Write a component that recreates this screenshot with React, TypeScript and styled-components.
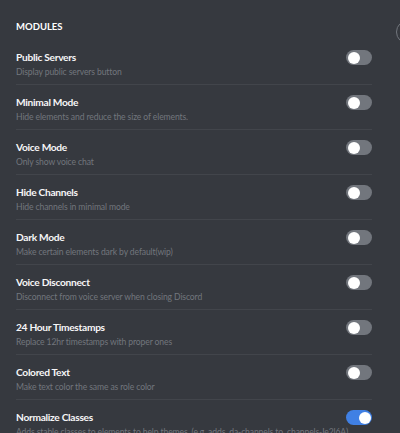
import styled, { createGlobalStyle } from "styled-components";

const GlobalStyle = createGlobalStyle`
  html, body {
    margin: 0;
    padding: 0;
    background: #36393f;
    overflow: hidden;
  }
  * {
    box-sizing: border-box;
  }
`;

const Page = styled.div`
  position: relative;
  width: 400px;
  height: 433px;
  overflow: hidden;
  background: #36393f;
  font-family: Lato, "Noto Sans", sans-serif;
  padding: 0 28px 0 16px;
`;

const Heading = styled.h2`
  margin: 0;
  padding-top: 20px;
  margin-bottom: 7px;
  font-size: 9.5px;
  line-height: 13px;
  font-weight: 700;
  color: #ffffff;
  text-transform: uppercase;
`;

const Row = styled.div`
  display: flex;
  align-items: flex-start;
  justify-content: space-between;
  height: 45px;
  padding-top: 11px;
  border-bottom: 1px solid #42454b;
`;

const Texts = styled.div`
  display: flex;
  flex-direction: column;
  min-width: 0;
`;

const Title = styled.div`
  font-size: 10.2px;
  line-height: 13px;
  font-weight: 700;
  letter-spacing: -0.3px;
  color: #f6f6f7;
  white-space: nowrap;
`;

const Desc = styled.div`
  margin-top: 2px;
  font-size: 8.6px;
  line-height: 12px;
  letter-spacing: -0.12px;
  color: #72767d;
  white-space: nowrap;
`;

const Toggle = styled.div<{ $on: boolean }>`
  flex: none;
  position: relative;
  width: 26px;
  height: 15px;
  margin-top: -1px;
  border-radius: 8px;
  background: ${(p) => (p.$on ? "#4080e4" : "#72767d")};
`;

const Knob = styled.span<{ $on: boolean }>`
  position: absolute;
  top: 1.5px;
  left: ${(p) => (p.$on ? "12.5px" : "1.5px")};
  width: 12px;
  height: 12px;
  border-radius: 50%;
  background: #ffffff;
`;

const CloseRing = styled.div`
  position: absolute;
  top: 20px;
  left: 396px;
  width: 24px;
  height: 24px;
  border-radius: 50%;
  border: 1.5px solid #72767d;
`;

const modules = [
  { title: "Public Servers", desc: "Display public servers button", on: false },
  { title: "Minimal Mode", desc: "Hide elements and reduce the size of elements.", on: false },
  { title: "Voice Mode", desc: "Only show voice chat", on: false },
  { title: "Hide Channels", desc: "Hide channels in minimal mode", on: false },
  { title: "Dark Mode", desc: "Make certain elements dark by default(wip)", on: false },
  { title: "Voice Disconnect", desc: "Disconnect from voice server when closing Discord", on: false },
  { title: "24 Hour Timestamps", desc: "Replace 12hr timestamps with proper ones", on: false },
  { title: "Colored Text", desc: "Make text color the same as role color", on: false },
  {
    title: "Normalize Classes",
    desc: "Adds stable classes to elements to help themes. (e.g. adds .da-channels to .channels-Ie2l6A)",
    on: true,
  },
];

const App = () => {
  return (
    <>
      <GlobalStyle />
      <Page>
        <CloseRing />
        <Heading>Modules</Heading>
        {modules.map((m) => (
          <Row key={m.title}>
            <Texts>
              <Title>{m.title}</Title>
              <Desc>{m.desc}</Desc>
            </Texts>
            <Toggle $on={m.on}>
              <Knob $on={m.on} />
            </Toggle>
          </Row>
        ))}
      </Page>
    </>
  );
};

export default App;
